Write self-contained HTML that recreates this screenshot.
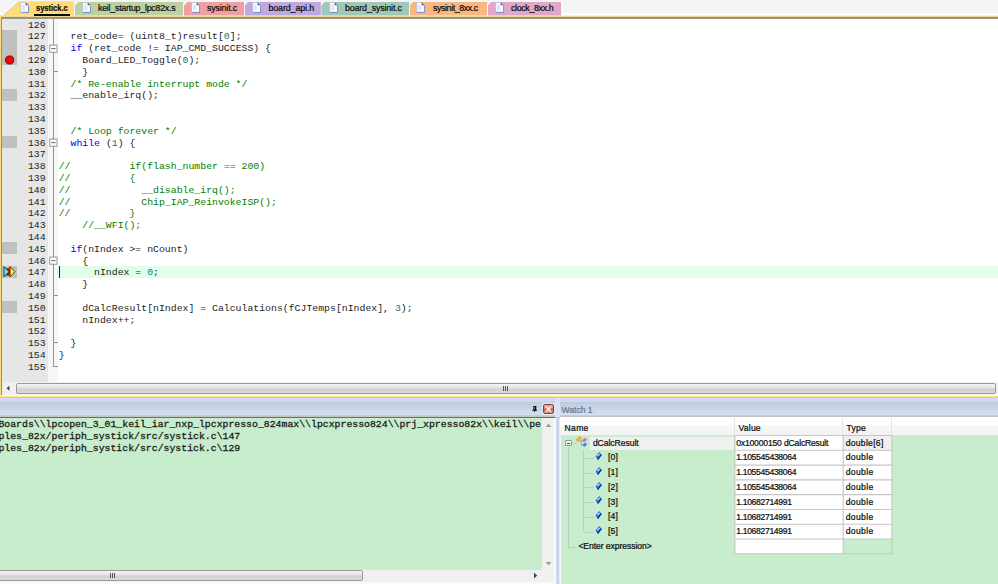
<!DOCTYPE html>
<html>
<head>
<meta charset="utf-8">
<title>systick.c</title>
<style>
html,body{margin:0;padding:0;}
body{width:998px;height:584px;overflow:hidden;position:relative;background:#fff;font-family:"Liberation Sans",sans-serif;}
.abs{position:absolute;}
/* ---------- tab strip ---------- */
#tabstrip{left:0;top:0;width:998px;height:15.5px;background:#f5f5f5;}
.tab{position:absolute;top:1px;height:14.5px;font-size:8.85px;line-height:14px;color:#1a1a1a;white-space:nowrap;}
.tab .bg{position:absolute;left:0;top:0;height:14.5px;}
.tab .ico{position:absolute;top:2px;width:8px;height:10px;}
.tab .lbl{position:absolute;top:0;letter-spacing:-0.1px;}
#tline1{left:0;top:15.5px;width:998px;height:1.9px;background:#f5d888;}
#tline2{left:1px;top:17.3px;width:997px;height:1.4px;background:linear-gradient(#8a8a8a,#9c9c9c);z-index:3;}
/* ---------- editor ---------- */
#editor{left:0;top:18.2px;width:998px;height:364px;background:#fff;overflow:hidden;}
#lborder{left:0;top:15.4px;width:1.2px;height:382px;background:#fcda80;}
#lborder2{left:1.2px;top:17px;width:0.9px;height:378px;background:#8e8e8e;}
#gutter{left:2px;top:0;width:46px;height:364px;background:#e6e6e6;}
#foldm{left:48px;top:0;width:10px;height:364px;background:#f6f6f6;}
#foldline{left:53px;top:0;width:1px;height:348px;background:#949494;}
.mk{position:absolute;left:2px;width:15px;background:#c0c0c0;}
.ln,.cl{position:absolute;font-family:"Liberation Mono",monospace;font-size:9.83px;line-height:11.8px;height:11.8px;white-space:pre;color:#242424;}
.ln{left:2px;width:43.6px;text-align:right;}
.cl{left:58.7px;}
.k{color:#0000ff;}
.n{color:#008080;}
.c{color:#008000;}
.fb{position:absolute;left:49.3px;width:8.2px;height:8px;border:1px solid #8e8e8e;background:#fff;box-sizing:border-box;}
.fb:after{content:"";position:absolute;left:1.2px;right:1.2px;top:2.5px;height:1px;background:#444;}
.ft{position:absolute;left:53px;width:4.5px;height:1px;background:#949494;}
#curline{left:58px;top:247.8px;width:940px;height:11.8px;background:#e0ffe8;}
#caret{left:59.1px;top:247.8px;width:1px;height:11.8px;background:#1c1c1c;}
/* ---------- editor scrollbar ---------- */
#hsb{left:2px;top:382px;width:996px;height:13.2px;background:#f0f0f0;}
#hsbthumb{left:13.5px;top:0.6px;width:980px;height:11.4px;border:1px solid #9a9a9a;border-radius:2px;box-sizing:border-box;background:linear-gradient(#f4f4f4,#e4e4e4 45%,#d0d0d0 55%,#dadada);}
#yline{left:0;top:395.8px;width:998px;height:2.6px;background:linear-gradient(#fff3c4,#fdd452 45%,#f6cb58 78%,#d4bc84);}
#wline{left:1.2px;top:395.2px;width:998px;height:0.9px;background:#fdfdfd;}
/* ---------- bottom panels ---------- */
#ptitle{left:0;top:398.3px;width:998px;height:19.3px;background:linear-gradient(#d1d9ee 0,#d1d9ee 3.6px,#bccbdc 3.8px,#d5e0f0 17.2px,#c6cbe3 17.4px,#c6cbe3 18.3px,#c4c4c4 18.4px);}
#cmd{left:0;top:417.8px;width:541.6px;height:152px;background:#c7edcc;overflow:hidden;}
#cmdtop{left:0;top:416.8px;width:554.5px;height:1.1px;background:#6d6d6d;}
.ct{position:absolute;left:-1.6px;font-family:"Liberation Mono",monospace;font-size:9.83px;line-height:11.8px;white-space:pre;color:#1c1c1c;-webkit-text-stroke:0.3px #1c1c1c;}
#cvsb{left:541.6px;top:417.8px;width:12.9px;height:166px;background:#f0f0f0;}
#chsb{left:0;top:569.8px;width:541.6px;height:14.2px;background:#f0f0f0;}
#chthumb{left:-4px;top:0.3px;width:367px;height:11px;border:1px solid #9a9a9a;border-radius:2px;box-sizing:border-box;background:linear-gradient(#f4f4f4,#e4e4e4 45%,#d0d0d0 55%,#dadada);}
#sep{left:554.5px;top:417.6px;width:5px;height:167px;background:linear-gradient(90deg,#f2f3f8 0,#f2f3f8 1.1px,#ccd4ee 1.6px,#ccd4ee 3.9px,#e2e6f4 4.3px,#eceff8 5px);}
#sep2{left:556px;top:417.6px;width:2.4px;height:167px;background:#ccd4ee;}
#watch{left:559.5px;top:417px;width:438.5px;height:167px;background:#c7edcc;}
#whead{left:0;top:0;width:438.5px;height:19.2px;background:linear-gradient(#fff 0,#fff 7.6px,#f7f8fa 8.4px,#f2f2f4 18.1px,#e3e0e4 18.3px,#e3e0e4 19px,#d9f2dc 19.2px);}
.wt{position:absolute;font-size:8.6px;line-height:12px;color:#0c0c0c;white-space:nowrap;-webkit-text-stroke-width:0.22px;}
.cell{position:absolute;box-sizing:border-box;background:#fff;border-right:1px solid #cfcfcf;border-bottom:1px solid #cfcfcf;height:14.79px;}
.tl{position:absolute;background:#bad0be;}
</style>
</head>
<body>
<div id="tabstrip" class="abs"></div>
<div class="abs" style="left:0;top:13.4px;width:998px;height:2.2px;background:linear-gradient(#fdfdfd,#ffffff 60%,#e4e8f4)"></div>
<div class="abs" style="left:561.5px;top:2px;width:1.6px;height:13.5px;background:#fff"></div>
<div class="abs" style="left:2.0px;top:1.2px;width:72.2px;height:14.6px;background:#ffdc78;clip-path:polygon(16px 0, 100% 0, 100% 100%, 0 100%)"></div>
<svg class="abs" style="left:20.0px;top:2.1px" width="10" height="12" viewBox="0 0 10 12"><path d="M0.6 0.4 H5.6 L8.4 3.2 V10.2 H0.6 Z" fill="#fdfdff" stroke="#a9b9e4" stroke-width="0.7"/><path d="M1 10.5 H8.6 V3.6" fill="none" stroke="#6f8fd8" stroke-width="0.9"/><path d="M5.6 0.4 L8.4 3.2 H5.6 Z" fill="#3b55a8"/><path d="M2.3 2.6 V8.2 M3.6 2.6 V8.2 M4.9 3.4 V8.2" stroke="#dcdce4" stroke-width="0.9" fill="none"/></svg>
<div class="wt" style="font-size:8.85px;left:35.6px;top:2.4px;font-weight:bold;transform:scaleX(0.86);transform-origin:0 0;letter-spacing:-0.057px;">systick.c</div>
<div class="abs" style="left:75.0px;top:1.6px;width:108.4px;height:14.0px;background:#bfd0a0;clip-path:polygon(4px 0, 100% 0, 100% 100%, 0 100%, 0 4px)"></div>
<svg class="abs" style="left:82.0px;top:2.1px" width="10" height="12" viewBox="0 0 10 12"><path d="M0.6 0.4 H5.6 L8.4 3.2 V10.2 H0.6 Z" fill="#fdfdff" stroke="#a9b9e4" stroke-width="0.7"/><path d="M1 10.5 H8.6 V3.6" fill="none" stroke="#6f8fd8" stroke-width="0.9"/><path d="M5.6 0.4 L8.4 3.2 H5.6 Z" fill="#3b55a8"/><path d="M2.3 2.6 V8.2 M3.6 2.6 V8.2 M4.9 3.4 V8.2" stroke="#dcdce4" stroke-width="0.9" fill="none"/></svg>
<div class="wt" style="font-size:8.85px;left:98.0px;top:2.4px;letter-spacing:-0.247px;">keil_startup_lpc82x.s</div>
<div class="abs" style="left:184.0px;top:1.6px;width:60.2px;height:14.0px;background:#f0a0a0;clip-path:polygon(4px 0, 100% 0, 100% 100%, 0 100%, 0 4px)"></div>
<svg class="abs" style="left:190.6px;top:2.1px" width="10" height="12" viewBox="0 0 10 12"><path d="M0.6 0.4 H5.6 L8.4 3.2 V10.2 H0.6 Z" fill="#fdfdff" stroke="#a9b9e4" stroke-width="0.7"/><path d="M1 10.5 H8.6 V3.6" fill="none" stroke="#6f8fd8" stroke-width="0.9"/><path d="M5.6 0.4 L8.4 3.2 H5.6 Z" fill="#3b55a8"/><path d="M2.3 2.6 V8.2 M3.6 2.6 V8.2 M4.9 3.4 V8.2" stroke="#dcdce4" stroke-width="0.9" fill="none"/></svg>
<div class="wt" style="font-size:8.85px;left:207.0px;top:2.4px;letter-spacing:-0.161px;">sysinit.c</div>
<div class="abs" style="left:244.8px;top:1.6px;width:76.0px;height:14.0px;background:#c0a8e0;clip-path:polygon(4px 0, 100% 0, 100% 100%, 0 100%, 0 4px)"></div>
<svg class="abs" style="left:252.0px;top:2.1px" width="10" height="12" viewBox="0 0 10 12"><path d="M0.6 0.4 H5.6 L8.4 3.2 V10.2 H0.6 Z" fill="#fdfdff" stroke="#a9b9e4" stroke-width="0.7"/><path d="M1 10.5 H8.6 V3.6" fill="none" stroke="#6f8fd8" stroke-width="0.9"/><path d="M5.6 0.4 L8.4 3.2 H5.6 Z" fill="#3b55a8"/><path d="M2.3 2.6 V8.2 M3.6 2.6 V8.2 M4.9 3.4 V8.2" stroke="#dcdce4" stroke-width="0.9" fill="none"/></svg>
<div class="wt" style="font-size:8.85px;left:268.4px;top:2.4px;letter-spacing:-0.084px;">board_api.h</div>
<div class="abs" style="left:321.4px;top:1.6px;width:87.6px;height:14.0px;background:#a0c8b8;clip-path:polygon(4px 0, 100% 0, 100% 100%, 0 100%, 0 4px)"></div>
<svg class="abs" style="left:329.0px;top:2.1px" width="10" height="12" viewBox="0 0 10 12"><path d="M0.6 0.4 H5.6 L8.4 3.2 V10.2 H0.6 Z" fill="#fdfdff" stroke="#a9b9e4" stroke-width="0.7"/><path d="M1 10.5 H8.6 V3.6" fill="none" stroke="#6f8fd8" stroke-width="0.9"/><path d="M5.6 0.4 L8.4 3.2 H5.6 Z" fill="#3b55a8"/><path d="M2.3 2.6 V8.2 M3.6 2.6 V8.2 M4.9 3.4 V8.2" stroke="#dcdce4" stroke-width="0.9" fill="none"/></svg>
<div class="wt" style="font-size:8.85px;left:345.0px;top:2.4px;letter-spacing:-0.147px;">board_sysinit.c</div>
<div class="abs" style="left:409.6px;top:1.6px;width:77.6px;height:14.0px;background:#f8b880;clip-path:polygon(4px 0, 100% 0, 100% 100%, 0 100%, 0 4px)"></div>
<svg class="abs" style="left:416.4px;top:2.1px" width="10" height="12" viewBox="0 0 10 12"><path d="M0.6 0.4 H5.6 L8.4 3.2 V10.2 H0.6 Z" fill="#fdfdff" stroke="#a9b9e4" stroke-width="0.7"/><path d="M1 10.5 H8.6 V3.6" fill="none" stroke="#6f8fd8" stroke-width="0.9"/><path d="M5.6 0.4 L8.4 3.2 H5.6 Z" fill="#3b55a8"/><path d="M2.3 2.6 V8.2 M3.6 2.6 V8.2 M4.9 3.4 V8.2" stroke="#dcdce4" stroke-width="0.9" fill="none"/></svg>
<div class="wt" style="font-size:8.85px;left:433.0px;top:2.4px;letter-spacing:-0.403px;">sysinit_8xx.c</div>
<div class="abs" style="left:487.8px;top:1.6px;width:73.7px;height:14.0px;background:#e0a8c8;clip-path:polygon(4px 0, 100% 0, 100% 100%, 0 100%, 0 4px)"></div>
<svg class="abs" style="left:495.0px;top:2.1px" width="10" height="12" viewBox="0 0 10 12"><path d="M0.6 0.4 H5.6 L8.4 3.2 V10.2 H0.6 Z" fill="#fdfdff" stroke="#a9b9e4" stroke-width="0.7"/><path d="M1 10.5 H8.6 V3.6" fill="none" stroke="#6f8fd8" stroke-width="0.9"/><path d="M5.6 0.4 L8.4 3.2 H5.6 Z" fill="#3b55a8"/><path d="M2.3 2.6 V8.2 M3.6 2.6 V8.2 M4.9 3.4 V8.2" stroke="#dcdce4" stroke-width="0.9" fill="none"/></svg>
<div class="wt" style="font-size:8.85px;left:511.0px;top:2.4px;letter-spacing:-0.347px;">clock_8xx.h</div>
<div class="abs" style="left:33.6px;top:14.1px;width:36.3px;height:1.6px;background:#0a0a0a"></div>
<svg class="abs" style="left:0;top:0" width="22" height="17" viewBox="0 0 22 17"><path d="M1.6 15.6 L17.8 1.2" stroke="#fff" stroke-width="1.2" fill="none"/><path d="M2.6 15.8 L18.6 1.6" stroke="#b8c6ea" stroke-width="0.6" fill="none"/></svg>
<div id="tline1" class="abs"></div>
<div id="tline2" class="abs"></div>
<div id="editor" class="abs">
<div id="gutter" class="abs"></div>
<div id="foldm" class="abs"></div>
<div id="curline" class="abs"></div>
<div id="foldline" class="abs"></div>
<div class="mk" style="top:11.8px;height:35.4px"></div>
<div class="mk" style="top:70.8px;height:11.8px"></div>
<div class="mk" style="top:118.0px;height:11.8px"></div>
<div class="mk" style="top:224.2px;height:11.8px"></div>
<div class="mk" style="top:247.8px;height:11.8px"></div>
<div class="mk" style="top:283.2px;height:11.8px"></div>
<svg class="abs" style="left:48px;top:25.6px" width="11" height="10" viewBox="0 0 11 10"><rect x="1.75" y="1.1" width="7.3" height="7.1" fill="#fff" stroke="#8c8c8c" stroke-width="0.9"/><path d="M3.3 4.65 H7.6" stroke="#505050" stroke-width="0.9"/></svg>
<svg class="abs" style="left:48px;top:120.0px" width="11" height="10" viewBox="0 0 11 10"><rect x="1.75" y="1.1" width="7.3" height="7.1" fill="#fff" stroke="#8c8c8c" stroke-width="0.9"/><path d="M3.3 4.65 H7.6" stroke="#505050" stroke-width="0.9"/></svg>
<svg class="abs" style="left:48px;top:238.0px" width="11" height="10" viewBox="0 0 11 10"><rect x="1.75" y="1.1" width="7.3" height="7.1" fill="#fff" stroke="#8c8c8c" stroke-width="0.9"/><path d="M3.3 4.65 H7.6" stroke="#505050" stroke-width="0.9"/></svg>
<div class="ft" style="top:52.7px"></div>
<div class="ft" style="top:276.9px"></div>
<div class="ft" style="top:324.1px"></div>
<div class="ft" style="top:347.7px"></div>
<svg class="abs" style="left:4px;top:35.9px" width="12" height="12" viewBox="0 0 12 12"><circle cx="5.6" cy="6" r="4.1" fill="#ff0000" stroke="#3a0000" stroke-width="0.8"/></svg>
<svg class="abs" style="left:2px;top:247.8px" width="16" height="12" viewBox="0 0 16 12"><circle cx="6.6" cy="5.9" r="3.9" fill="#ff0000"/><path d="M2 0.6 L7 5.7 L2 10.8 Z" fill="#3ff" stroke="#111" stroke-width="0.8"/><path d="M8 0.6 L13 5.7 L8 10.8 Z" fill="#ff0" stroke="#114" stroke-width="0.8"/></svg>
<div class="ln" style="top:1.4px">126</div>
<div class="ln" style="top:13.2px">127</div>
<div class="cl" style="top:13.2px">  ret_code= (uint8_t)result[<span class="n">0</span>];</div>
<div class="ln" style="top:25.0px">128</div>
<div class="cl" style="top:25.0px">  <span class="k">if</span> (ret_code != IAP_CMD_SUCCESS) {</div>
<div class="ln" style="top:36.8px">129</div>
<div class="cl" style="top:36.8px">    Board_LED_Toggle(<span class="n">0</span>);</div>
<div class="ln" style="top:48.6px">130</div>
<div class="cl" style="top:48.6px">    }</div>
<div class="ln" style="top:60.4px">131</div>
<div class="cl" style="top:60.4px">  <span class="c">/* Re-enable interrupt mode */</span></div>
<div class="ln" style="top:72.2px">132</div>
<div class="cl" style="top:72.2px">  __enable_irq();</div>
<div class="ln" style="top:84.0px">133</div>
<div class="ln" style="top:95.8px">134</div>
<div class="ln" style="top:107.6px">135</div>
<div class="cl" style="top:107.6px">  <span class="c">/* Loop forever */</span></div>
<div class="ln" style="top:119.4px">136</div>
<div class="cl" style="top:119.4px">  <span class="k">while</span> (<span class="n">1</span>) {</div>
<div class="ln" style="top:131.2px">137</div>
<div class="ln" style="top:143.0px">138</div>
<div class="cl" style="top:143.0px"><span class="c">//          if(flash_number == 200)</span></div>
<div class="ln" style="top:154.8px">139</div>
<div class="cl" style="top:154.8px"><span class="c">//          {</span></div>
<div class="ln" style="top:166.6px">140</div>
<div class="cl" style="top:166.6px"><span class="c">//            __disable_irq();</span></div>
<div class="ln" style="top:178.4px">141</div>
<div class="cl" style="top:178.4px"><span class="c">//            Chip_IAP_ReinvokeISP();</span></div>
<div class="ln" style="top:190.2px">142</div>
<div class="cl" style="top:190.2px"><span class="c">//          }</span></div>
<div class="ln" style="top:202.0px">143</div>
<div class="cl" style="top:202.0px">    <span class="c">//__WFI();</span></div>
<div class="ln" style="top:213.8px">144</div>
<div class="ln" style="top:225.6px">145</div>
<div class="cl" style="top:225.6px">  <span class="k">if</span>(nIndex &gt;= nCount)</div>
<div class="ln" style="top:237.4px">146</div>
<div class="cl" style="top:237.4px">    {</div>
<div class="ln" style="top:249.2px">147</div>
<div class="cl" style="top:249.2px">      nIndex = <span class="n">0</span>;</div>
<div class="ln" style="top:261.0px">148</div>
<div class="cl" style="top:261.0px">    }</div>
<div class="ln" style="top:272.8px">149</div>
<div class="ln" style="top:284.6px">150</div>
<div class="cl" style="top:284.6px">    dCalcResult[nIndex] = Calculations(fCJTemps[nIndex], <span class="n">3</span>);</div>
<div class="ln" style="top:296.4px">151</div>
<div class="cl" style="top:296.4px">    nIndex++;</div>
<div class="ln" style="top:308.2px">152</div>
<div class="ln" style="top:320.0px">153</div>
<div class="cl" style="top:320.0px">  }</div>
<div class="ln" style="top:331.8px">154</div>
<div class="cl" style="top:331.8px">}</div>
<div class="ln" style="top:343.6px">155</div>
<div id="caret" class="abs"></div>
</div>
<div id="lborder" class="abs"></div>
<div id="lborder2" class="abs"></div>
<div id="hsb" class="abs"><div id="hsbthumb" class="abs"></div></div>
<div id="wline" class="abs"></div>
<div id="yline" class="abs"></div>
<div id="ptitle" class="abs">
<div class="abs" style="left:554.5px;top:0;width:5px;height:19px;background:#dbe4f4"></div>
<svg class="abs" style="left:531px;top:6.7px" width="8" height="8" viewBox="531 405 8 8"><path d="M533.2 406.1 H536.3 V409.4 L537.4 410.7 H532 L533.2 409.4 Z" fill="#0a0a0a"/><path d="M534.65 410.6 V412" stroke="#0a0a0a" stroke-width="0.9"/><path d="M534.2 406.8 V409.2" stroke="#e8e8f0" stroke-width="0.7"/></svg>
<div class="abs" style="left:543.1px;top:5.7px;width:10.7px;height:10.4px;box-sizing:border-box;border:1px solid #7a3a44;border-radius:2.2px;background:linear-gradient(#f2aa9a,#ec9482 38%,#d8502f 50%,#e07a62 75%,#ea9686);box-shadow:0 0 1px 0.6px #e8eef8"><svg class="abs" style="left:1.2px;top:1.2px" width="7" height="6.4" viewBox="0 0 7 6.4"><path d="M1 0.7 L3.5 2.2 L6 0.7 L4.7 3.2 L6 5.7 L3.5 4.3 L1 5.7 L2.3 3.2 Z" fill="#f4f4f6" stroke="#f4f4f6" stroke-width="0.8" stroke-linejoin="round"/></svg></div>
<div class="wt" style="left:561.6px;top:5.30px;letter-spacing:-0.043px;color:#66758f;">Watch 1</div>
</div>
<div id="cmdtop" class="abs"></div>
<div id="cmd" class="abs">
<div class="ct" style="top:1.4px">Boards\\lpcopen_3_01_keil_iar_nxp_lpcxpresso_824max\\lpcxpresso824\\prj_xpresso82x\\keil\\pe</div>
<div class="ct" style="top:13.2px">ples_82x/periph_systick/src/systick.c\147</div>
<div class="ct" style="top:25px">ples_82x/periph_systick/src/systick.c\129</div>
</div>
<div id="cvsb" class="abs"></div>
<div id="chsb" class="abs"><div id="chthumb" class="abs"></div></div>
<div class="abs" style="left:0;top:581.8px;width:554.5px;height:2.2px;background:#fafafa"></div>
<div id="sep" class="abs"></div>
<div id="watch" class="abs">
<div class="abs" style="left:0;top:0;width:1.6px;height:167px;background:#f4f6fb"></div>
<div id="whead" class="abs"></div>
<div class="abs" style="left:174.4px;top:1px;width:1px;height:17px;background:#e3e3e3"></div>
<div class="abs" style="left:282.7px;top:1px;width:1px;height:17px;background:#e3e3e3"></div>
<div class="abs" style="left:331.4px;top:1px;width:1px;height:17px;background:#e3e3e3"></div>
<div class="wt" style="left:5.1px;top:5.00px;letter-spacing:0.291px;">Name</div>
<div class="wt" style="left:179.1px;top:5.00px;letter-spacing:0.171px;">Value</div>
<div class="wt" style="left:287.1px;top:5.00px;letter-spacing:0.165px;">Type</div>
<div class="abs" style="left:30.5px;top:19.5px;width:144.4px;height:13.39px;background:#f0f0f0"></div>
<svg class="abs" style="left:0;top:0" width="438.5" height="167" viewBox="559.5 417.0 438.5 167"><rect x="734.4" y="435.50" width="108.3" height="118.32" fill="#fff"/><rect x="842.7" y="450.29" width="48.7" height="88.74" fill="#fff"/><rect x="842.7" y="435.50" width="48.7" height="14.79" fill="#f0f0f0"/><path d="M733.9 435.50 H891.9" stroke="#c6c6c6" stroke-width="1.1"/><path d="M733.9 450.29 H891.9" stroke="#c6c6c6" stroke-width="1.1"/><path d="M733.9 465.08 H891.9" stroke="#c6c6c6" stroke-width="1.1"/><path d="M733.9 479.87 H891.9" stroke="#c6c6c6" stroke-width="1.1"/><path d="M733.9 494.66 H891.9" stroke="#c6c6c6" stroke-width="1.1"/><path d="M733.9 509.45 H891.9" stroke="#c6c6c6" stroke-width="1.1"/><path d="M733.9 524.24 H891.9" stroke="#c6c6c6" stroke-width="1.1"/><path d="M733.9 539.03 H891.9" stroke="#c6c6c6" stroke-width="1.1"/><path d="M733.9 553.82 H891.9" stroke="#c6c6c6" stroke-width="1.1"/><path d="M734.4 435.50 V553.82" stroke="#c6c6c6" stroke-width="1.1"/><path d="M842.7 435.50 V553.82" stroke="#c6c6c6" stroke-width="1.1"/><path d="M891.4 435.50 V553.82" stroke="#c6c6c6" stroke-width="1.1"/></svg>
<div class="wt" style="left:176.7px;top:19.70px;letter-spacing:-0.179px;">0x10000150 dCalcResult</div>
<div class="wt" style="left:286.2px;top:19.70px;letter-spacing:0.281px;">double[6]</div>
<div class="wt" style="left:176.7px;top:34.49px;letter-spacing:-0.324px;">1.105545438064</div>
<div class="wt" style="left:286.2px;top:34.49px;letter-spacing:0.365px;">double</div>
<div class="wt" style="left:176.7px;top:49.28px;letter-spacing:-0.324px;">1.105545438064</div>
<div class="wt" style="left:286.2px;top:49.28px;letter-spacing:0.365px;">double</div>
<div class="wt" style="left:176.7px;top:64.07px;letter-spacing:-0.324px;">1.105545438064</div>
<div class="wt" style="left:286.2px;top:64.07px;letter-spacing:0.365px;">double</div>
<div class="wt" style="left:176.7px;top:78.86px;letter-spacing:-0.327px;">1.10682714991</div>
<div class="wt" style="left:286.2px;top:78.86px;letter-spacing:0.365px;">double</div>
<div class="wt" style="left:176.7px;top:93.65px;letter-spacing:-0.327px;">1.10682714991</div>
<div class="wt" style="left:286.2px;top:93.65px;letter-spacing:0.365px;">double</div>
<div class="wt" style="left:176.7px;top:108.44px;letter-spacing:-0.327px;">1.10682714991</div>
<div class="wt" style="left:286.2px;top:108.44px;letter-spacing:0.365px;">double</div>
<div class="tl" style="left:8.4px;top:29.5px;width:1px;height:100.5px"></div>
<div class="tl" style="left:8.9px;top:129.5px;width:8.6px;height:1px"></div>
<div class="tl" style="left:12.0px;top:26.0px;width:5.0px;height:1px"></div>
<div class="tl" style="left:23.5px;top:33.0px;width:1px;height:82.2px"></div>
<div class="tl" style="left:24.0px;top:40.8px;width:10.0px;height:1px"></div>
<div class="tl" style="left:24.0px;top:55.6px;width:10.0px;height:1px"></div>
<div class="tl" style="left:24.0px;top:70.4px;width:10.0px;height:1px"></div>
<div class="tl" style="left:24.0px;top:85.2px;width:10.0px;height:1px"></div>
<div class="tl" style="left:24.0px;top:100.0px;width:10.0px;height:1px"></div>
<div class="tl" style="left:24.0px;top:114.7px;width:10.0px;height:1px"></div>
<div class="abs" style="left:5.9px;top:23.1px;width:6.4px;height:6.4px;box-sizing:border-box;border:0.9px solid #989898;border-radius:1px;background:linear-gradient(135deg,#fff,#e0e0e0)"><div class="abs" style="left:1px;top:1.8px;width:2.8px;height:1px;background:#4a5aa4"></div></div>
<svg class="abs" style="left:15.5px;top:18.0px" width="14" height="13" viewBox="575 435 14 13"><path d="M579.5 441 H581.3 V445 H583 M581.3 441.3 L583 440.6" fill="none" stroke="#7f93b4" stroke-width="0.8"/><path d="M575.8 439.6 L580 436.2 L582 438.4 L577.8 441.9 Z" fill="#f2b92a" stroke="#c8962a" stroke-width="0.4"/><path d="M582.5 440 L585.2 438 L586.8 439.8 L584 441.9 Z" fill="#ee5ae6" stroke="#c040c0" stroke-width="0.3"/><path d="M582.7 444.8 L585.4 442.8 L586.8 444.6 L584.2 446.7 Z" fill="#3f86ea" stroke="#2a60c0" stroke-width="0.3"/></svg>
<svg class="abs" style="left:34.5px;top:34.0px" width="9" height="10" viewBox="594 451 9 10"><path d="M599.2 452.1 L601.8 455 L598 460 L595.5 456.4 Z" fill="#2b6ce6"/><path d="M601.8 455 L598 460 L597.2 458.8 L600.6 454.6 Z" fill="#0d2f9c"/><path d="M597 455.6 L599.2 453.4 L600 454.4 L597.8 456.6 Z" fill="#cfe2ff"/></svg>
<svg class="abs" style="left:34.5px;top:48.8px" width="9" height="10" viewBox="594 451 9 10"><path d="M599.2 452.1 L601.8 455 L598 460 L595.5 456.4 Z" fill="#2b6ce6"/><path d="M601.8 455 L598 460 L597.2 458.8 L600.6 454.6 Z" fill="#0d2f9c"/><path d="M597 455.6 L599.2 453.4 L600 454.4 L597.8 456.6 Z" fill="#cfe2ff"/></svg>
<svg class="abs" style="left:34.5px;top:63.6px" width="9" height="10" viewBox="594 451 9 10"><path d="M599.2 452.1 L601.8 455 L598 460 L595.5 456.4 Z" fill="#2b6ce6"/><path d="M601.8 455 L598 460 L597.2 458.8 L600.6 454.6 Z" fill="#0d2f9c"/><path d="M597 455.6 L599.2 453.4 L600 454.4 L597.8 456.6 Z" fill="#cfe2ff"/></svg>
<svg class="abs" style="left:34.5px;top:78.4px" width="9" height="10" viewBox="594 451 9 10"><path d="M599.2 452.1 L601.8 455 L598 460 L595.5 456.4 Z" fill="#2b6ce6"/><path d="M601.8 455 L598 460 L597.2 458.8 L600.6 454.6 Z" fill="#0d2f9c"/><path d="M597 455.6 L599.2 453.4 L600 454.4 L597.8 456.6 Z" fill="#cfe2ff"/></svg>
<svg class="abs" style="left:34.5px;top:93.1px" width="9" height="10" viewBox="594 451 9 10"><path d="M599.2 452.1 L601.8 455 L598 460 L595.5 456.4 Z" fill="#2b6ce6"/><path d="M601.8 455 L598 460 L597.2 458.8 L600.6 454.6 Z" fill="#0d2f9c"/><path d="M597 455.6 L599.2 453.4 L600 454.4 L597.8 456.6 Z" fill="#cfe2ff"/></svg>
<svg class="abs" style="left:34.5px;top:107.9px" width="9" height="10" viewBox="594 451 9 10"><path d="M599.2 452.1 L601.8 455 L598 460 L595.5 456.4 Z" fill="#2b6ce6"/><path d="M601.8 455 L598 460 L597.2 458.8 L600.6 454.6 Z" fill="#0d2f9c"/><path d="M597 455.6 L599.2 453.4 L600 454.4 L597.8 456.6 Z" fill="#cfe2ff"/></svg>
<div class="wt" style="left:33.4px;top:19.50px;letter-spacing:-0.049px;">dCalcResult</div>
<div class="wt" style="left:48.4px;top:34.29px;letter-spacing:0.246px;">[0]</div>
<div class="wt" style="left:48.4px;top:49.08px;letter-spacing:0.246px;">[1]</div>
<div class="wt" style="left:48.4px;top:63.87px;letter-spacing:0.246px;">[2]</div>
<div class="wt" style="left:48.4px;top:78.66px;letter-spacing:0.246px;">[3]</div>
<div class="wt" style="left:48.4px;top:93.45px;letter-spacing:0.246px;">[4]</div>
<div class="wt" style="left:48.4px;top:108.24px;letter-spacing:0.246px;">[5]</div>
<div class="wt" style="left:18.9px;top:123.03px;letter-spacing:-0.068px;">&lt;Enter expression&gt;</div>
</div>
<svg class="abs" style="left:6.4px;top:385.4px" width="5" height="7" viewBox="0 0 5 7"><path d="M3.4 0.8 L0.6 3.3 L3.4 5.8 Z" fill="#3a3a3a"/></svg>
<div class="abs" style="left:502.6px;top:386.4px;width:5px;height:4.6px;background:repeating-linear-gradient(90deg,#555 0,#555 1px,transparent 1px,transparent 2px)"></div>
<div class="abs" style="left:110.4px;top:573.4px;width:5px;height:4.6px;background:repeating-linear-gradient(90deg,#555 0,#555 1px,transparent 1px,transparent 2px)"></div>
<svg class="abs" style="left:533px;top:572.4px" width="5" height="7" viewBox="0 0 5 7"><path d="M1 0.6 L4.2 3.5 L1 6.4 Z" fill="#444"/></svg>
<svg class="abs" style="left:544.6px;top:422.6px" width="7" height="5" viewBox="0 0 7 5"><path d="M0.6 4 L3.5 0.8 L6.4 4 Z" fill="#9a9a9a"/></svg>
<svg class="abs" style="left:544.6px;top:561px" width="7" height="5" viewBox="0 0 7 5"><path d="M0.6 1 L3.5 4.2 L6.4 1 Z" fill="#9a9a9a"/></svg>
</body>
</html>
